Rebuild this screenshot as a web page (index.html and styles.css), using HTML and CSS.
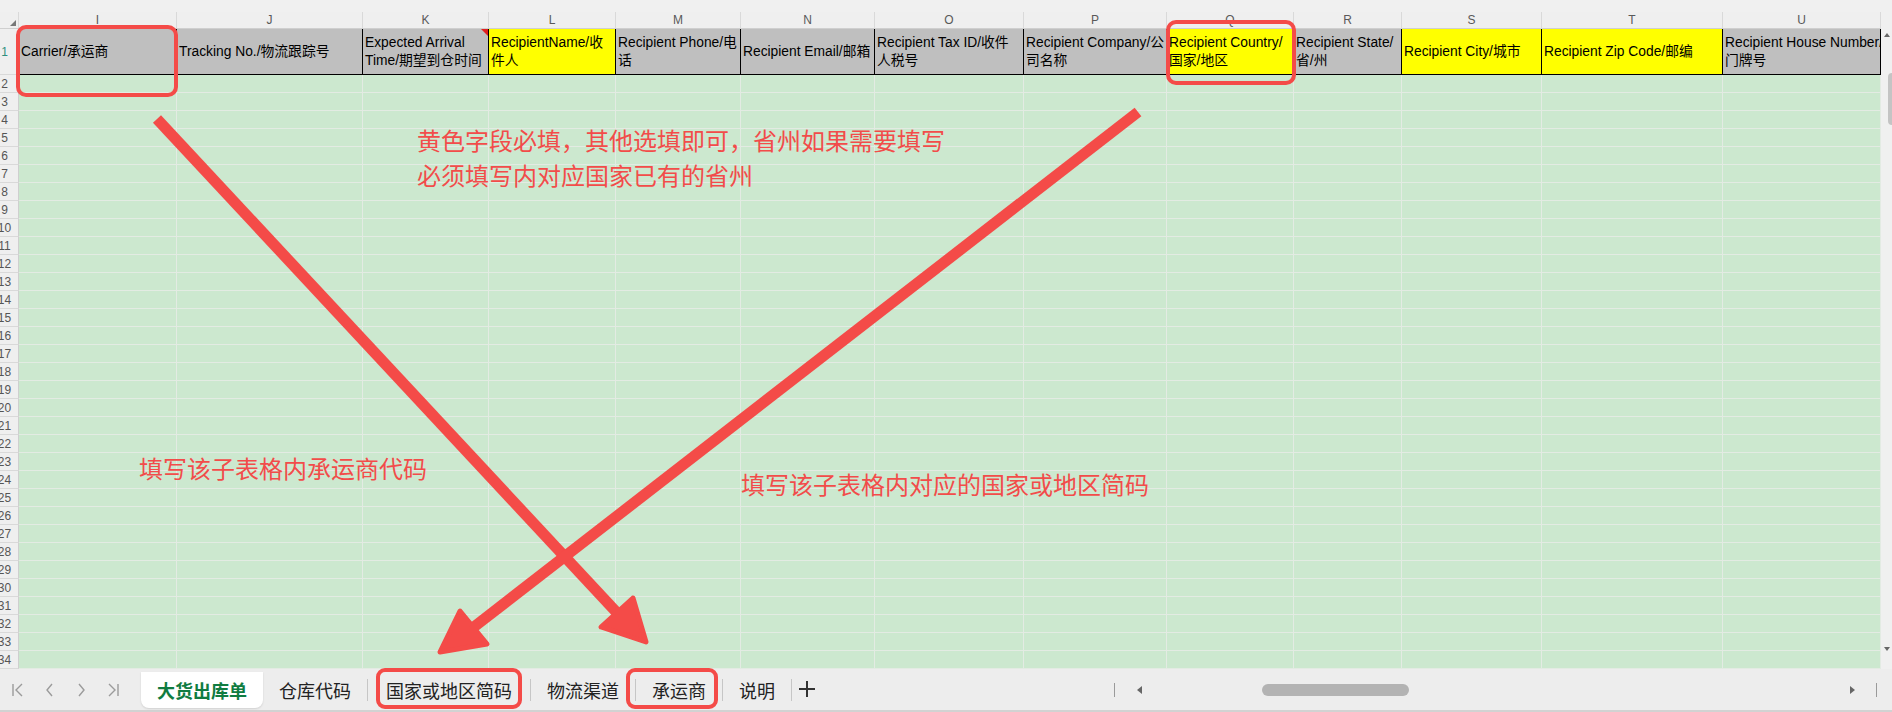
FILE: index.html
```html
<!DOCTYPE html>
<html lang="zh-CN">
<head>
    <meta charset="UTF-8">
    <meta name="viewport" content="width=device-width, initial-scale=1.0">
    <title>大货出库单</title>
    <link rel="stylesheet" href="styles.css">
</head>
<body>
<div class="app">
    <div class="top-strip"></div>

    <div class="sheet-area">
        <div class="sheet" id="sheet">
            <!-- column letters -->
            <div class="col-head corner"></div>
            <div class="col-head">I</div>
            <div class="col-head">J</div>
            <div class="col-head">K</div>
            <div class="col-head">L</div>
            <div class="col-head">M</div>
            <div class="col-head">N</div>
            <div class="col-head">O</div>
            <div class="col-head">P</div>
            <div class="col-head">Q</div>
            <div class="col-head">R</div>
            <div class="col-head">S</div>
            <div class="col-head">T</div>
            <div class="col-head">U</div>

            <!-- row 1: field names -->
            <div class="row-num current">1</div>
            <div class="field">Carrier/承运商</div>
            <div class="field">Tracking No./物流跟踪号</div>
            <div class="field noted">Expected Arrival<br>Time/期望到仓时间</div>
            <div class="field required">RecipientName/收<br>件人</div>
            <div class="field">Recipient Phone/电<br>话</div>
            <div class="field">Recipient Email/邮箱</div>
            <div class="field">Recipient Tax ID/收件<br>人税号</div>
            <div class="field">Recipient Company/公<br>司名称</div>
            <div class="field required">Recipient Country/<br>国家/地区</div>
            <div class="field">Recipient State/<br>省/州</div>
            <div class="field required">Recipient City/城市</div>
            <div class="field required">Recipient Zip Code/邮编</div>
            <div class="field">Recipient House Number/<br>门牌号</div>
        </div>

        <div class="vscroll">
            <span class="vs-up"></span>
            <span class="vs-thumb"></span>
            <span class="vs-down"></span>
        </div>
    </div>

    <div class="tabbar">
        <div class="nav">
            <svg width="16" height="16" viewBox="0 0 16 16"><path d="M3 2v12M12 2L6 8l6 6"/></svg>
            <svg width="16" height="16" viewBox="0 0 16 16"><path d="M10 2L5 8l5 6"/></svg>
            <svg width="16" height="16" viewBox="0 0 16 16"><path d="M6 2l5 6-5 6"/></svg>
            <svg width="16" height="16" viewBox="0 0 16 16"><path d="M4 2l6 6-6 6M13 2v12"/></svg>
        </div>
        <div class="tab active">大货出库单</div>
        <div class="tab">仓库代码</div>
        <span class="sep"></span>
        <div class="tab wide">国家或地区简码</div>
        <span class="sep"></span>
        <div class="tab">物流渠道</div>
        <span class="sep"></span>
        <div class="tab">承运商</div>
        <span class="sep"></span>
        <div class="tab">说明</div>
        <span class="sep"></span>
        <svg class="add-sheet" width="20" height="20" viewBox="0 0 20 20"><path d="M10 2v16M2 10h16"/></svg>

        <div class="hscroll">
            <span class="hs-bar"></span>
            <span class="hs-left"></span>
            <div class="hs-track"><span class="hs-thumb"></span></div>
            <span class="hs-right"></span>
            <span class="hs-bar end"></span>
        </div>
    </div>

    <!-- red markup drawn over the sheet -->
    <svg class="marks" width="1892" height="712" viewBox="0 0 1892 712">
        <g fill="none" stroke="#f44b48" stroke-width="4">
            <rect x="18" y="27" width="158" height="68" rx="8"/>
            <rect x="1168" y="22" width="126" height="61" rx="8"/>
            <rect x="378" y="670" width="142" height="37" rx="7"/>
            <rect x="628" y="670" width="88" height="37" rx="7"/>
        </g>
        <g stroke="#f44b48" stroke-width="11">
            <line x1="157" y1="119" x2="620" y2="616"/>
            <line x1="1138" y1="112" x2="470" y2="630"/>
        </g>
        <g fill="#f44b48" stroke="#f44b48" stroke-width="5" stroke-linejoin="round">
            <polygon points="646,642 633,598 601,627"/>
            <polygon points="440,652 460,611 487,644"/>
        </g>
    </svg>

    <div class="note note-required">黄色字段必填，其他选填即可，省州如果需要填写<br>必须填写内对应国家已有的省州</div>
    <div class="note note-carrier">填写该子表格内承运商代码</div>
    <div class="note note-country">填写该子表格内对应的国家或地区简码</div>
</div>

<script>
    // empty data rows 2..34
    const sheet = document.getElementById('sheet');
    for (let r = 2; r <= 34; r++) {
        const num = document.createElement('div');
        num.className = 'row-num';
        num.textContent = r;
        sheet.appendChild(num);
        for (let c = 0; c < 13; c++) {
            const cell = document.createElement('div');
            cell.className = 'cell';
            sheet.appendChild(cell);
        }
    }
</script>
</body>
</html>
```

FILE: styles.css
```css
body {
    margin: 0;
    font-family: "Liberation Sans", "Noto Sans CJK SC", sans-serif;
    background: #efefef;
}

.app {
    position: relative;
    width: 1892px;
    height: 712px;
    overflow: hidden;
    background: #efefef;
}

.top-strip {
    height: 12px;
    background: #f0f0f0;
}

.sheet-area {
    display: flex;
}

.sheet {
    display: grid;
    grid-template-columns: 19px 158px 186px 126px 127px 125px 134px 149px 143px 127px 108px 140px 181px 158px;
    grid-template-rows: 17px 46px repeat(33, 18px);
    width: 1881px;
}

.sheet > div {
    box-sizing: border-box;
}

.col-head {
    background: #efefef;
    border-right: 1px solid #d9d9d9;
    border-bottom: 1px solid #cfcfcf;
    color: #595959;
    font-size: 12px;
    display: flex;
    align-items: center;
    justify-content: center;
}

.corner {
    position: relative;
}

.corner::after {
    content: "";
    position: absolute;
    right: 2px;
    bottom: 2px;
    border-left: 6px solid transparent;
    border-bottom: 6px solid #777;
}

.field {
    background: #bfbfbf;
    border-right: 1px solid #000;
    border-bottom: 1px solid #000;
    font-size: 13.8px;
    line-height: 18px;
    padding: 0 2px;
    display: flex;
    align-items: center;
    white-space: nowrap;
    overflow: hidden;
    color: #000;
}

.field.required {
    background: #ffff00;
}

.field.noted {
    position: relative;
}

.field.noted::after {
    content: "";
    position: absolute;
    top: 0;
    right: 0;
    border-top: 7px solid #e02020;
    border-left: 7px solid transparent;
}

.row-num {
    background: #efefef;
    border-right: 1px solid #cfcfcf;
    border-bottom: 1px solid #d9d9d9;
    color: #555;
    font-size: 12px;
    display: flex;
    align-items: center;
    justify-content: center;
    padding-right: 9px;
    overflow: hidden;
}

.row-num.current {
    color: #2f8f7f;
}

.cell {
    background: #cce8cf;
    border-right: 1px solid #e3ebe3;
    border-bottom: 1px solid #e3ebe3;
}

/* vertical scrollbar */
.vscroll {
    width: 11px;
    background: #f0f0f0;
    display: flex;
    flex-direction: column;
    overflow: hidden;
}

.vs-up {
    margin: 21px 0 0 3px;
    width: 0;
    border-left: 3px solid transparent;
    border-right: 3px solid transparent;
    border-bottom: 4px solid #666;
}

.vs-thumb {
    margin: 36px 0 0 7px;
    width: 10px;
    height: 52px;
    border-radius: 4px;
    background: #c4c4c4;
}

.vs-down {
    margin: 522px 0 0 3px;
    width: 0;
    border-left: 3px solid transparent;
    border-right: 3px solid transparent;
    border-top: 4px solid #666;
}

/* sheet tabs */
.tabbar {
    display: flex;
    align-items: flex-start;
    height: 43px;
    box-sizing: border-box;
    border-bottom: 2px solid #d2d2d2;
    background: #ededed;
    font-family: "Noto Sans CJK SC", sans-serif;
}

.nav {
    width: 141px;
    height: 41px;
    box-sizing: border-box;
    padding-left: 10px;
    display: flex;
    align-items: center;
    gap: 15.5px;
}

.nav svg path {
    fill: none;
    stroke: #9b9b9b;
    stroke-width: 1.4;
}

.tab {
    height: 36px;
    margin-top: 3px;
    padding: 0 16px;
    display: flex;
    align-items: center;
    font-size: 18px;
    color: #222;
}

.tab.active {
    background: #fff;
    color: #107c41;
    font-weight: bold;
    border-radius: 0 0 8px 8px;
    box-shadow: 0 1px 2px rgba(0, 0, 0, 0.12);
}

.tab.wide {
    padding: 0 18px;
}

.sep {
    width: 1px;
    height: 22px;
    margin-top: 10px;
    background: #c6c6c6;
}

.add-sheet {
    margin: 10px 0 0 5px;
}

.add-sheet path {
    stroke: #333;
    stroke-width: 2;
}

.hscroll {
    margin-left: auto;
    width: 782px;
    height: 41px;
    display: flex;
    align-items: center;
}

.hs-bar {
    width: 1px;
    height: 14px;
    margin-left: 4px;
    background: #9a9a9a;
}

.hs-bar.end {
    margin-left: 21px;
    margin-right: 15px;
}

.hs-left {
    margin-left: 22px;
    width: 0;
    border-top: 4px solid transparent;
    border-bottom: 4px solid transparent;
    border-right: 5px solid #666;
}

.hs-right {
    width: 0;
    border-top: 4px solid transparent;
    border-bottom: 4px solid transparent;
    border-left: 5px solid #666;
}

.hs-track {
    width: 708px;
    display: flex;
}

.hs-thumb {
    margin-left: 120px;
    width: 147px;
    height: 12px;
    border-radius: 6px;
    background: #b3b3b3;
}

/* markup layer */
.marks {
    position: absolute;
    top: 0;
    left: 0;
    pointer-events: none;
}

.note {
    position: absolute;
    color: #f24c4a;
    font-family: "Noto Sans CJK SC", sans-serif;
    font-size: 24px;
    line-height: 35px;
    white-space: nowrap;
}

.note-required {
    left: 417px;
    top: 122px;
}

.note-carrier {
    left: 139px;
    top: 450px;
}

.note-country {
    left: 741px;
    top: 466px;
}
```
